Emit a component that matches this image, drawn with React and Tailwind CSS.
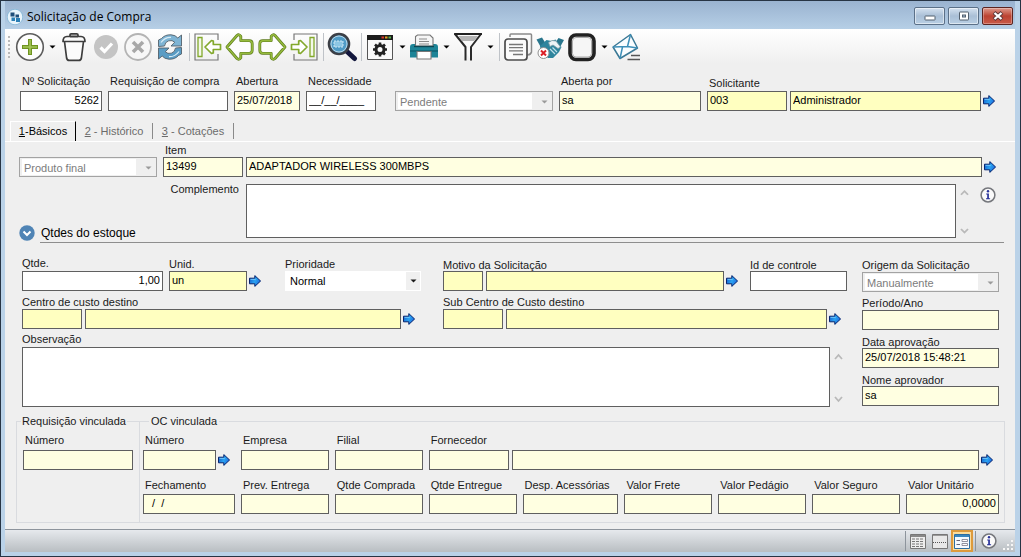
import React, { useId } from "react";
import clsx from "clsx";

const TONES = {
  white: "bg-white",
  locked: "bg-[#ffffe1]",
  lookup: "bg-[#ffffc0]",
};

function Box({ tone = "white", align, className, ...props }) {
  return (
    <input
      type="text"
      className={clsx(
        "h-5 min-w-0 rounded-none border border-[#5f5f5f] px-0.5 pb-0.5 text-[11px] leading-4 text-black outline-none",
        TONES[tone],
        align === "right" && "text-right",
        className,
      )}
      {...props}
    />
  );
}

function Field({ label, labelClass = "h-4 leading-4", className, children, ...props }) {
  const id = useId();
  return (
    <div className={clsx("flex min-w-0 flex-col", className)}>
      <label htmlFor={id} className={clsx("block whitespace-nowrap", labelClass)}>
        {label}
      </label>
      <div className="flex items-center">
        {children ? children(id) : <Box id={id} className="w-full" {...props} />}
      </div>
    </div>
  );
}

function DisabledSelect({ id, value, label, className }) {
  return (
    <span className={clsx("relative flex h-5 border border-[#a3a3a3] bg-[#efefef] py-px pr-5 pl-0.5", className)}>
      <select
        id={id}
        disabled
        aria-label={label}
        className="w-full appearance-none bg-white px-0.5 pt-px text-[11px] leading-4 text-[#7c7c7c] opacity-100 outline-none"
      >
        <option>{value}</option>
      </select>
      <Caret className="absolute top-2 right-1 text-[#9a9a9a]" />
    </span>
  );
}

function Caret({ className }) {
  return (
    <svg viewBox="0 0 7 4" className={clsx("pointer-events-none h-1 w-[7px]", className)} fill="currentColor">
      <path d="M0.5 0.5h6L3.5 3.6z" />
    </svg>
  );
}

function GoButton({ label, className }) {
  return (
    <button type="button" aria-label={label} className={clsx("ml-0.5 h-3 w-3 shrink-0", className)}>
      <svg viewBox="0 0 12 12" className="h-3 w-3">
        <defs>
          <linearGradient id="go" x1="0" y1="0" x2="1" y2="0.4">
            <stop offset="0" stopColor="#1256c8" />
            <stop offset="0.6" stopColor="#2ba4f2" />
            <stop offset="1" stopColor="#1e6fe0" />
          </linearGradient>
        </defs>
        <path d="M0.5 3.2h5.3V0.6L11.6 6l-5.8 5.4V8.8H0.5z" fill="url(#go)" stroke="#06246e" strokeWidth="1" />
        <path d="M1.5 4.4h5.2" stroke="#7fd4ff" strokeWidth="0.8" />
      </svg>
    </button>
  );
}

function InfoIcon() {
  return (
    <svg viewBox="0 0 16 16" className="h-4 w-4">
      <circle cx="8" cy="8" r="6.9" fill="#fafafa" stroke="#75777c" strokeWidth="1.5" />
      <path d="M6.2 6.6h2.7v4.7h1.2v1H6v-1h1.2V7.6h-1z" fill="#26309a" />
      <circle cx="8" cy="4.3" r="1.2" fill="#26309a" />
    </svg>
  );
}

function ScrollArrows({ className }) {
  return (
    <svg viewBox="0 0 9 60" preserveAspectRatio="none" className={clsx("w-[9px]", className)} fill="none" stroke="#b9b9b9" strokeWidth="1.8">
      <path d="M1 12l3.5-4L8 12M1 50l3.5 4L8 50" />
    </svg>
  );
}

const GREEN = "#82a82c";
const LEFT_ARROW = "M3 16L13 4.5q2-1.8 3.8.8v4.4h8.4q3 0 3 3v6.6q0 3-3 3h-8.4v4.4q-1.8 2.6-3.8.8z";

const ICONS = {
  add: (
    <>
      <circle cx="16" cy="16" r="13.3" fill="#fdfdfd" stroke="#5c5c5c" strokeWidth="1.6" />
      <path d="M16 8v16M8 16h16" stroke="#6f9420" strokeWidth="4" />
      <path d="M16 9v14M9 16h14" stroke="#a6c75a" strokeWidth="1.6" />
    </>
  ),
  trash: (
    <g fill="none" stroke="#3d3d3d" strokeWidth="1.7" strokeLinejoin="round">
      <path d="M12 5.5V4q0-1.2 1.2-1.2h5.6Q20 2.8 20 4v1.5" />
      <path d="M5 10.500q0-4.8 4-5h14q4 .2 4 5zM6.5 10.5L8.6 27q.4 2.4 2.6 2.4h9.6q2.2 0 2.6-2.4l2.1-16.5" fill="#fbfbfb" />
      <path d="M12 5.5h8" />
    </g>
  ),
  check: (
    <>
      <circle cx="16" cy="16" r="12" fill="#c4c4c4" />
      <path d="M10.5 16.5l4 4 7.5-8" fill="none" stroke="#fff" strokeWidth="3.2" />
    </>
  ),
  cancel: (
    <>
      <circle cx="16" cy="16" r="13" fill="#f7f7f7" stroke="#b4b4b4" strokeWidth="1.8" />
      <path d="M11 11l10 10M21 11L11 21" stroke="#a8a8a8" strokeWidth="3.6" />
    </>
  ),
  refresh: (
    <g stroke="#54616b" strokeWidth="0.9" strokeLinejoin="round">
      <path d="M4.5 15.5V9l3-1.5Q11 3.5 17 3.8q4.5.2 6.8 3.2L27.500 4v11H17l3.7-3.8q-2.3-2.4-6-1.4-3.7 1-4.2 5.2z" fill="#7eb4d4" />
      <path d="M27.5 16.5V23l-3 1.5Q21 28.5 15 28.2q-4.5-.2-6.8-3.2L4.500 28V17H15l-3.7 3.8q2.3 2.4 6 1.4 3.700-1 4.200-5.200z" fill="#5a9cc4" />
      <path d="M7 11.5q4-5.5 10-5.2M25 20.5q-4 5.5-10 5.2" fill="none" stroke="#d8ecf6" strokeWidth="1.2" />
    </g>
  ),
  first: (
    <>
      <path d="M26 9V3H3v26h23v-6" fill="none" stroke="#777" strokeWidth="1.2" />
      <path d="M6 6.5h4v19H6z" fill="#f4f8ea" stroke={GREEN} strokeWidth="1.3" />
      <path d="M13 16l6.5-6.5 1.8.6v3.4h7.2v5h-7.2v3.4l-1.8.6z" fill="#fff" stroke={GREEN} strokeWidth="1.7" strokeLinejoin="round" />
    </>
  ),
  prev: (
    <>
      <path d={LEFT_ARROW} fill="#fdfdfd" stroke="#5d7b1c" strokeWidth="2.8" strokeLinejoin="round" />
      <path d={LEFT_ARROW} fill="none" stroke="#96bb3d" strokeWidth="1.5" strokeLinejoin="round" />
    </>
  ),
  next: (
    <g transform="matrix(-1 0 0 1 32 0)">
      <path d={LEFT_ARROW} fill="#fdfdfd" stroke="#5d7b1c" strokeWidth="2.8" strokeLinejoin="round" />
      <path d={LEFT_ARROW} fill="none" stroke="#96bb3d" strokeWidth="1.5" strokeLinejoin="round" />
    </g>
  ),
  last: (
    <>
      <path d="M6 9V3h23v26H6v-6" fill="none" stroke="#777" strokeWidth="1.2" />
      <path d="M22 6.5h4v19h-4z" fill="#f4f8ea" stroke={GREEN} strokeWidth="1.3" />
      <path d="M19 16l-6.5-6.5-1.8.6v3.4H3.5v5h7.2v3.4l1.8.6z" fill="#fff" stroke={GREEN} strokeWidth="1.7" strokeLinejoin="round" />
    </>
  ),
  search: (
    <>
      <path d="M21 20.5l7.5 7" stroke="#12163c" strokeWidth="5" strokeLinecap="round" />
      <circle cx="13" cy="13" r="10" fill="#4f9bc6" stroke="#3c3f46" strokeWidth="2.6" />
      <circle cx="13" cy="13" r="8" fill="none" stroke="#b9d6e6" strokeWidth="1" />
      <path d="M8 10h9v6H8z" fill="#8cc6e4" stroke="#d9eef8" strokeWidth="0.9" strokeDasharray="2 1" />
    </>
  ),
  settings: (
    <>
      <path d="M3.5 4.5h25v24h-25z" fill="#fafafa" stroke="#555" strokeWidth="1" />
      <path d="M3 4h26v5H3z" fill="#1c1c1c" />
      <path d="M17.5 5.5h2.5v2h-2.5z" fill="#d9352a" />
      <path d="M21 5.5h2.5v2H21z" fill="#e8a020" />
      <path d="M24.5 5.5H27v2h-2.5z" fill="#55b548" />
      <circle cx="16" cy="18.5" r="4" fill="none" stroke="#222" strokeWidth="3" />
      <path d="M16 11.5v3M16 22.5v3M9 18.5h3M20 18.5h3M11 13.5l2.2 2.2M18.8 21.3l2.2 2.2M21 13.5l-2.2 2.2M13.2 21.3L11 23.5" stroke="#222" strokeWidth="2.6" />
    </>
  ),
  print: (
    <>
      <path d="M2 16q0-3 3-3h22q3 0 3 3v10.5H2z" fill="#1d8497" />
      <path d="M2 20h28" stroke="#0f6272" strokeWidth="1.5" />
      <path d="M7.5 15V5.5l2-1.5H22l3 3v8z" fill="#f6f6f6" stroke="#777" strokeWidth="1.1" />
      <path d="M11 8h8M11 10.5h10M11 13h10" stroke="#8b8b8b" strokeWidth="1.2" />
      <path d="M6 15.5h20" stroke="#0d4551" strokeWidth="1.4" />
      <path d="M9 20.5h14V28H9z" fill="#fff" stroke="#777" strokeWidth="1.1" />
    </>
  ),
  filter: (
    <>
      <path d="M3 3h26L19 16v13.5M3 3l10.5 13v13.5" fill="#fafafa" stroke="#2a2a2a" strokeWidth="2" strokeLinejoin="round" />
      <path d="M6 5h20l-4 5H10z" fill="#b5b5b5" />
      <path d="M2 3h28" stroke="#222" strokeWidth="1.8" />
    </>
  ),
  docs: (
    <>
      <path d="M8 6V4q0-1 1-1h19.5q1 0 1 1v17q-.5 2.5-4 3" fill="none" stroke="#8a8a8a" strokeWidth="1.5" />
      <rect x="3" y="8" width="22" height="21" rx="3" fill="#fbfbfb" stroke="#4c4c4c" strokeWidth="1.7" />
      <path d="M7 13.5h14M7 16.7h14M7 19.9h14M11 23.5h10" stroke="#777" strokeWidth="1.3" />
    </>
  ),
  deal: (
    <>
      <path d="M2.5 8.5L8 6.5l4 6.5-5 3.500zM30 9l-5.500-2-4 6 5 4z" fill="#28758c" />
      <path d="M6 15l6.5-6 5 1 4-1.5 6 7.5-2.500 5-6 6H14l-7-7z" fill="#2f859d" />
      <path d="M14.5 11.5l3.500-2 4 .5 4.500 6-2.500 1.500-5-3.500-3 1.500z" fill="#eef4f6" stroke="#7a9aa4" strokeWidth="0.8" />
      <path d="M16 18l5 5M18.5 16.5l4.500 4.500" stroke="#bfe0ea" strokeWidth="1.2" />
      <circle cx="9.5" cy="22" r="5.5" fill="#fff" stroke="#8f8f8f" strokeWidth="1" />
      <path d="M7 19.5l5 5M12 19.5l-5 5" stroke="#dc1f26" strokeWidth="2" />
    </>
  ),
  square: (
    <>
      <rect x="4" y="4" width="24" height="24.5" rx="6" fill="#f6f6f6" stroke="#222" strokeWidth="3.6" />
      <rect x="6.5" y="6.5" width="19" height="19.5" rx="3.5" fill="none" stroke="#9a9a9a" strokeWidth="0.8" />
    </>
  ),
  mail: (
    <>
      <path d="M3 16L20.500 3.500l7 13.500L10 27.500z" fill="#fafdff" stroke="#3a7895" strokeWidth="1.5" strokeLinejoin="round" />
      <path d="M3 16l14.500-.5L20.500 3.500M10 27.500l2.500-11.500M27.500 17l-10-1.500" fill="none" stroke="#3d8fb8" strokeWidth="1.5" strokeLinejoin="round" />
      <path d="M21 24.500H30M17.500 28.500H30" stroke="#555" strokeWidth="1.3" />
    </>
  ),
};

const TOOLBAR = [
  { icon: "add", label: "Novo" },
  { menu: "Opções de novo" },
  { icon: "trash", label: "Excluir" },
  { icon: "check", label: "Confirmar", disabled: true },
  { icon: "cancel", label: "Cancelar", disabled: true },
  { icon: "refresh", label: "Atualizar" },
  { sep: true },
  { icon: "first", label: "Primeiro" },
  { icon: "prev", label: "Anterior" },
  { icon: "next", label: "Próximo" },
  { icon: "last", label: "Último" },
  { sep: true },
  { icon: "search", label: "Pesquisar" },
  { sep: true },
  { icon: "settings", label: "Configurar" },
  { menu: "Opções de configuração" },
  { icon: "print", label: "Imprimir" },
  { menu: "Opções de impressão" },
  { icon: "filter", label: "Filtrar" },
  { menu: "Opções de filtro" },
  { sep: true },
  { icon: "docs", label: "Documentos" },
  { icon: "deal", label: "Cancelar acordo" },
  { icon: "square", label: "Situação" },
  { menu: "Opções de situação" },
  { icon: "mail", label: "Enviar e-mail" },
];

function Toolbar() {
  return (
    <div role="toolbar" className="flex h-[35px] items-center bg-linear-to-b from-white to-[#efefef] pl-[3px]">
      <span className="mr-[3px] h-[22px] w-[3px] border-l-2 border-dotted border-[#b9b9b9]" />
      {TOOLBAR.map((item, i) => {
        if (item.sep) {
          return (
            <span key={i} className="flex w-1.5 justify-center">
              <span className="h-7 w-px bg-[#bfc3c8]" />
            </span>
          );
        }
        if (item.menu) {
          return (
            <button key={i} type="button" aria-label={item.menu} className="grid h-8 w-3 place-items-center text-black">
              <Caret />
            </button>
          );
        }
        return (
          <button key={i} type="button" aria-label={item.label} disabled={item.disabled} className="h-8 w-8">
            <svg viewBox="0 0 32 32" className="h-8 w-8">{ICONS[item.icon]}</svg>
          </button>
        );
      })}
    </div>
  );
}

function TitleBar() {
  const button =
    "grid h-[18px] w-[31px] place-items-center rounded-[2px] border border-[#5b7088] bg-linear-to-b from-[#d5e2f0] via-[#a9bfd6] to-[#b9cfe4] shadow-[inset_0_0_0_1px_rgba(255,255,255,0.5)]";
  return (
    <header className="flex h-7 items-center bg-linear-to-b from-[#9ab3d0] to-[#b6cfe6] pr-0.5 pl-0.5">
      <svg viewBox="0 0 16 16" className="mt-1 h-4 w-4">
        <circle cx="8" cy="8" r="7.8" fill="#e8f4fb" stroke="#7db4d6" strokeWidth="0.8" />
        <path d="M3.5 3.5h4v4h-4zM8.5 5.5H12v3H8.5z" fill="#1f4e79" />
        <path d="M4.5 8.5H8v3.5H4.5zM9 9h4v4H9z" fill="#2b7fb5" />
      </svg>
      <h1 className="mt-1 ml-1 font-['Open_Sans','Noto_Sans',sans-serif] text-xs text-black">Solicitação de Compra</h1>
      <div className="mt-0.5 ml-auto flex gap-[3px]">
        <button type="button" aria-label="Minimizar" className={button}>
          <svg viewBox="0 0 12 10" className="h-2.5 w-3">
            <rect x="1" y="5" width="10" height="4" rx="0.5" fill="#fff" stroke="#53606e" />
          </svg>
        </button>
        <button type="button" aria-label="Restaurar" className={button}>
          <svg viewBox="0 0 12 10" className="h-2.5 w-3">
            <rect x="1.5" y="1" width="9" height="8" rx="0.5" fill="#fff" stroke="#53606e" />
            <rect x="4.5" y="4" width="3" height="2" fill="#a9bfd6" stroke="#53606e" />
          </svg>
        </button>
        <button
          type="button"
          aria-label="Fechar"
          className="grid h-[18px] w-[31px] place-items-center rounded-[2px] border border-[#5c2420] bg-linear-to-b from-[#dd9a8d] via-[#bb4231] to-[#c95a48] shadow-[inset_0_0_0_1px_rgba(255,255,255,0.3)]"
        >
          <svg viewBox="0 0 12 10" className="h-2.5 w-3">
            <path d="M2 1.5l8 7M10 1.5l-8 7" stroke="#5b3a3a" strokeWidth="4" />
            <path d="M2.5 2l7 6M9.5 2l-7 6" stroke="#fff" strokeWidth="2.3" />
          </svg>
        </button>
      </div>
    </header>
  );
}

function RequestHeader() {
  const labelClass = "h-[18px] pl-0.5 leading-4";
  return (
    <div className="flex items-end gap-1.5 pt-[9px] pr-5 pl-[15px]">
      <Field label="Nº Solicitação" labelClass={labelClass} className="w-[82px]" align="right" defaultValue="5262" />
      <Field label="Requisição de compra" labelClass={labelClass} className="w-[120px]" />
      <Field label="Abertura" labelClass={labelClass} className="w-[66px]" tone="locked" defaultValue="25/07/2018" />
      <Field label="Necessidade" labelClass={labelClass} className="w-[70px]" defaultValue="__/__/____" />
      <DisabledSelect label="Situação" value="Pendente" className="ml-[13px] w-[158px]" />
      <Field label="Aberta por" labelClass={labelClass} className="w-[142px]" tone="locked" defaultValue="sa" />
      <Field label="Solicitante" labelClass="h-[18px] pl-0.5 leading-5" className="flex-1">
        {(id) => (
          <>
            <Box id={id} tone="lookup" defaultValue="003" className="w-20" />
            <Box aria-label="Nome do solicitante" tone="lookup" defaultValue="Administrador" className="ml-[3px] flex-1" />
            <GoButton label="Abrir solicitante" />
          </>
        )}
      </Field>
    </div>
  );
}

function Tabs() {
  return (
    <div role="tablist" className="mt-[10px] flex h-[21px] border-b border-white pl-[5px]">
      <button role="tab" aria-selected="true" type="button" className="w-[66px] border-t border-r border-l border-t-white border-r-black border-l-white text-black">
        <u>1</u>-Básicos
      </button>
      <button role="tab" aria-selected="false" type="button" className="my-0.5 w-[77px] border-r border-[#8a8a8a] text-[#6b6b6b]">
        <u>2</u> - Histórico
      </button>
      <button role="tab" aria-selected="false" type="button" className="my-0.5 w-[81px] border-r border-[#8a8a8a] text-[#6b6b6b]">
        <u>3</u> - Cotações
      </button>
    </div>
  );
}

function ItemSection() {
  return (
    <section className="pr-[19px] pl-3.5">
      <div className="flex items-end gap-1.5">
        <DisabledSelect label="Tipo de item" value="Produto final" className="w-[138px]" />
        <Field label="Item" labelClass="h-[15px] pl-0.5 leading-4" className="flex-1">
          {(id) => (
            <>
              <Box id={id} tone="locked" defaultValue="13499" className="w-20" />
              <Box aria-label="Descrição do item" tone="locked" defaultValue="ADAPTADOR WIRELESS 300MBPS" className="ml-[3px] flex-1" />
              <GoButton label="Abrir item" />
            </>
          )}
        </Field>
      </div>

      <div className="mt-[7px] flex">
        <div className="-mb-[3px] flex w-[227px] flex-col justify-between">
          <label htmlFor="complemento" className="pr-[7px] text-right leading-[11px]">Complemento</label>
          <div className="flex h-4 items-center gap-1.5">
            <button type="button" aria-label="Expandir quantidades" className="h-4 w-4">
              <svg viewBox="0 0 16 16" className="h-4 w-4">
                <circle cx="8" cy="8" r="7.7" fill="#4f84b5" />
                <path d="M4.5 6.5L8 10l3.5-3.5" fill="none" stroke="#fff" strokeWidth="2" />
              </svg>
            </button>
            <h2 className="text-xs leading-4 text-black">Qtdes do estoque</h2>
          </div>
        </div>
        <textarea id="complemento" className="h-[54px] min-w-0 flex-1 resize-none overflow-hidden border border-[#5f5f5f] bg-white p-0.5 outline-none" />
        <ScrollArrows className="ml-1 h-[54px]" />
        <button type="button" aria-label="Informações" className="mt-[3px] ml-[11px] h-4 w-4">
          <InfoIcon />
        </button>
      </div>
      <hr className="mt-1 -mr-2 ml-[21px] border-[#8e8e8e]" />
    </section>
  );
}

function DetailsSection() {
  return (
    <section className="mt-3 flex gap-[15px] pr-4 pl-[17px]">
      <div className="flex min-w-0 flex-1 flex-col gap-0.5">
        <div className="grid grid-cols-[421fr_404fr] gap-y-0.5">
          <div className="flex">
            <Field label="Qtde." className="w-[141px]" align="right" defaultValue="1,00" />
            <Field label="Unid." className="ml-1.5 w-[92px]" labelClass="h-4 leading-[18px]">
              {(id) => (
                <>
                  <Box id={id} tone="lookup" defaultValue="un" className="flex-1" />
                  <GoButton label="Abrir unidade" />
                </>
              )}
            </Field>
            <Field label="Prioridade" labelClass="h-4 leading-[18px]" className="ml-6 w-[136px]">
              {(id) => (
                <span className="relative flex h-5 w-full">
                  <select id={id} className="w-full appearance-none bg-white pt-px pr-4 pl-[5px] text-[11px] text-black outline-none">
                    <option>Normal</option>
                  </select>
                  <span className="pointer-events-none absolute top-0 right-0 grid h-5 w-4 place-items-center border border-white bg-[#f0f0f0]">
                    <Caret />
                  </span>
                </span>
              )}
            </Field>
          </div>
          <div className="flex gap-3">
            <Field label="Motivo da Solicitação" labelClass="h-4 leading-5" className="flex-1">
              {(id) => (
                <>
                  <Box id={id} tone="lookup" className="w-10" />
                  <Box aria-label="Descrição do motivo" tone="lookup" className="ml-[3px] flex-1" />
                  <GoButton label="Abrir motivo" />
                </>
              )}
            </Field>
            <Field label="Id de controle" labelClass="h-4 leading-5" className="w-[97px]" />
          </div>
          <Field label="Centro de custo destino" labelClass="h-4 leading-[18px]" className="pr-7">
            {(id) => (
              <>
                <Box id={id} tone="lookup" className="w-[60px]" />
                <Box aria-label="Nome do centro de custo" tone="lookup" className="ml-[3px] flex-1" />
                <GoButton label="Abrir centro de custo" />
              </>
            )}
          </Field>
          <Field label="Sub Centro de Custo destino" labelClass="h-4 leading-[18px]" className="pr-1.5">
            {(id) => (
              <>
                <Box id={id} tone="lookup" className="w-[60px]" />
                <Box aria-label="Nome do sub centro de custo" tone="lookup" className="ml-[3px] flex-1" />
                <GoButton label="Abrir sub centro de custo" />
              </>
            )}
          </Field>
        </div>
        <Field label="Observação">
          {(id) => (
            <>
              <textarea id={id} className="h-[60px] min-w-0 flex-1 resize-none overflow-hidden border border-[#5f5f5f] bg-white p-0.5 outline-none" />
              <ScrollArrows className="mr-1 ml-1 h-[60px]" />
            </>
          )}
        </Field>
      </div>

      <div className="flex w-[137px] flex-col gap-0.5 pt-px">
        <Field label="Origem da Solicitação" labelClass="h-4 leading-[18px]">
          {(id) => <DisabledSelect id={id} value="Manualmente" className="w-full" />}
        </Field>
        <Field label="Período/Ano" labelClass="h-4 leading-[18px]" tone="locked" />
        <Field label="Data aprovação" labelClass="h-4 leading-5" tone="locked" defaultValue="25/07/2018 15:48:21" />
        <Field label="Nome aprovador" labelClass="h-4 leading-5" tone="locked" defaultValue="sa" />
      </div>
    </section>
  );
}

function LinkedSection() {
  const top = "h-[18px] pl-0.5 leading-4";
  const bottom = "h-[18px] pl-0.5 leading-[18px]";
  return (
    <section className="mt-1.5 flex pr-2.5 pl-[11px]">
      <fieldset className="w-[121px] shrink-0 border border-r-0 border-[#d9dbdf] px-1.5 pt-[3px]">
        <legend className="-ml-0.5 px-px leading-4 whitespace-nowrap">Requisição vinculada</legend>
        <Field label="Número" labelClass={top} className="w-[110px]" tone="locked" />
      </fieldset>
      <fieldset className="min-w-0 flex-1 border border-[#d9dbdf] pt-[3px] pr-[5px] pb-2 pl-[3px]">
        <legend className="ml-1.5 px-0.5 leading-4">OC vinculada</legend>
        <div className="grid grid-cols-[92fr_88fr_88fr_88fr_96fr_88fr_88fr_88fr_93fr] gap-1.5">
          <Field label="Número" labelClass={top} className="pr-[5px]">
            {(id) => (
              <>
                <Box id={id} tone="locked" className="flex-1" />
                <GoButton label="Abrir OC" />
              </>
            )}
          </Field>
          <Field label="Empresa" labelClass={top} tone="locked" />
          <Field label="Filial" labelClass={top} tone="locked" />
          <Field label="Fornecedor" labelClass={top} className="col-span-6 pr-1.5">
            {(id) => (
              <>
                <Box id={id} tone="locked" className="w-20" />
                <Box aria-label="Nome do fornecedor" tone="locked" className="ml-[3px] flex-1" />
                <GoButton label="Abrir fornecedor" />
              </>
            )}
          </Field>
          <Field label="Fechamento" labelClass={bottom} tone="locked" defaultValue="  /  /" />
          <Field label="Prev. Entrega" labelClass={bottom} tone="locked" />
          <Field label="Qtde Comprada" labelClass={bottom} tone="locked" />
          <Field label="Qtde Entregue" labelClass={bottom} tone="locked" />
          <Field label="Desp. Acessórias" labelClass={bottom} tone="locked" />
          <Field label="Valor Frete" labelClass={bottom} tone="locked" />
          <Field label="Valor Pedágio" labelClass={bottom} tone="locked" />
          <Field label="Valor Seguro" labelClass={bottom} tone="locked" />
          <Field label="Valor Unitário" labelClass={bottom} tone="locked" align="right" defaultValue="0,0000" />
        </div>
      </fieldset>
    </section>
  );
}

function StatusBar() {
  return (
    <footer className="mt-auto flex h-[23px] items-center justify-end border-t border-[#8d949c] bg-linear-to-b from-[#e6e9ed] to-[#b9bec2]">
      <span className="mr-1 h-5 w-px bg-[#8d949c]" />
      <button type="button" aria-label="Modo grade" className="h-[15px] w-4">
        <svg viewBox="0 0 16 15" className="h-[15px] w-4">
          <path d="M0.5 0.5h15v14H0.5z" fill="#ededed" stroke="#777" />
          <path d="M1 2h14" stroke="#888" strokeWidth="2" />
          <path d="M2 5h12M2 7.5h12M2 10h12M2 12.5h12" stroke="#777" strokeDasharray="3 1" />
        </svg>
      </button>
      <button type="button" aria-label="Modo dividido" className="ml-1.5 h-[15px] w-4">
        <svg viewBox="0 0 16 15" className="h-[15px] w-4">
          <path d="M0.5 0.5h15v14H0.5z" fill="#e8e8e8" stroke="#777" />
          <path d="M1 1.5h14" stroke="#999" />
          <path d="M1 8.5h14" stroke="#555" strokeDasharray="1 1" />
        </svg>
      </button>
      <button type="button" aria-label="Modo formulário" aria-pressed="true" className="ml-[3px] grid h-[22px] w-[22px] place-items-center border-2 border-[#dd9a3c] bg-[#fbdc9c]">
        <svg viewBox="0 0 16 15" className="h-[15px] w-4">
          <path d="M0.5 0.5h15v14H0.5z" fill="#f4faff" stroke="#2c6da0" />
          <path d="M1 2h14" stroke="#3a86bd" strokeWidth="2" />
          <path d="M2.5 6.5H6M2.5 10.5H6" stroke="#667" />
          <path d="M8 5.5h5.5v2H8zM8 9.5h5.5v2H8z" fill="#fff" stroke="#778" strokeWidth="0.8" />
        </svg>
      </button>
      <span className="ml-0.5 h-5 w-px bg-[#8d949c]" />
      <button type="button" aria-label="Ajuda" className="ml-[5px] h-4 w-4">
        <InfoIcon />
      </button>
      <svg viewBox="0 0 10 10" className="mt-2 mr-0.5 ml-1.5 h-2.5 w-2.5" fill="#f6f6f6">
        <path d="M8 0h2v2H8zM4 4h2v2H4zM8 4h2v2H8zM0 8h2v2H0zM4 8h2v2H4zM8 8h2v2H8z" />
      </svg>
    </footer>
  );
}

export default function App() {
  return (
    <div className="flex min-h-screen flex-col border border-[#273444] bg-[#bad2e8] pr-[5px] pb-1 pl-1 font-['Liberation_Sans',Arial,sans-serif] text-[11px] text-[#1a1a1a]">
      <TitleBar />
      <main className="flex flex-1 flex-col bg-[#efefef]">
        <Toolbar />
        <RequestHeader />
        <Tabs />
        <ItemSection />
        <DetailsSection />
        <LinkedSection />
        <StatusBar />
      </main>
    </div>
  );
}
